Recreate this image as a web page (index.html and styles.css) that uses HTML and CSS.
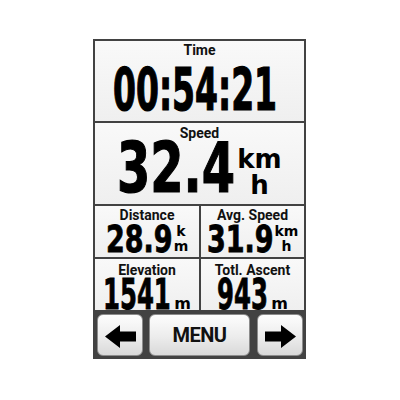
FILE: index.html
```html
<!DOCTYPE html>
<html>
<head>
<meta charset="utf-8">
<link rel="stylesheet" href="styles.css">
</head>
<body>
<div class="device">
  <div class="cell wide time">
    <div class="label">Time</div>
    <div class="value">
      <span class="dbox"><span class="digits">00:54:21</span></span>
    </div>
  </div>
  <div class="cell wide speed">
    <div class="label">Speed</div>
    <div class="value">
      <span class="dbox"><span class="digits">32.4</span></span>
      <span class="unit"><span>km</span><span>h</span></span>
    </div>
  </div>
  <div class="cell dist">
    <div class="label">Distance</div>
    <div class="value">
      <span class="dbox"><span class="digits">28.9</span></span>
      <span class="unit"><span>k</span><span>m</span></span>
    </div>
  </div>
  <div class="cell avg">
    <div class="label">Avg. Speed</div>
    <div class="value">
      <span class="dbox"><span class="digits">31.9</span></span>
      <span class="unit"><span>km</span><span>h</span></span>
    </div>
  </div>
  <div class="cell elev">
    <div class="label">Elevation</div>
    <div class="value">
      <span class="dbox"><span class="digits">1541</span></span>
      <span class="unit"><span>m</span></span>
    </div>
  </div>
  <div class="cell asc">
    <div class="label">Totl. Ascent</div>
    <div class="value">
      <span class="dbox"><span class="digits">943</span></span>
      <span class="unit"><span>m</span></span>
    </div>
  </div>
  <div class="bar">
    <div class="btn arrow prev">
      <svg width="31" height="23" viewBox="0 0 31 23"><polygon points="0,11.5 15,0 15,6.5 31,6.5 31,16.5 15,16.5 15,23" fill="#000"/></svg>
    </div>
    <div class="btn menu">MENU</div>
    <div class="btn arrow next">
      <svg width="31" height="23" viewBox="0 0 31 23"><polygon points="31,11.5 16,0 16,6.5 0,6.5 0,16.5 16,16.5 16,23" fill="#000"/></svg>
    </div>
  </div>
</div>
</body>
</html>
```

FILE: styles.css
```css
html, body {
  margin: 0;
  padding: 0;
  background: #ffffff;
}

.device {
  margin: 39px 0 0 93px;
  width: 213px;
  height: 320px;
  box-sizing: border-box;
  padding: 2px;
  background: #424242;
  display: grid;
  grid-template-columns: 104px 103px;
  grid-template-rows: 80px 81px 51px 51px 45px;
  gap: 2px;
}

.cell {
  background: linear-gradient(#f9f9f9, #efefef);
  display: flex;
  flex-direction: column;
  align-items: center;
}

.wide {
  grid-column: span 2;
}

.label {
  font-family: Roboto, "DejaVu Sans Condensed", sans-serif;
  font-weight: bold;
  font-size: 14px;
  line-height: 14px;
  color: #111;
  margin-top: 2px;
}

.value {
  display: flex;
  align-items: flex-start;
  justify-content: center;
}

.dbox {
  display: block;
}

.digits {
  display: block;
  font-family: "DejaVu Sans Condensed", "DejaVu Sans", sans-serif;
  font-weight: bold;
  line-height: 0.766;
  white-space: nowrap;
  color: #000;
  transform-origin: 0 0;
  -webkit-text-stroke: 0.8px #000;
}

.unit {
  display: flex;
  flex-direction: column;
  align-items: center;
  font-family: "DejaVu Sans", sans-serif;
  font-weight: bold;
  color: #000;
}

/* Time */
.time .value {
  margin-top: 11px;
  padding-right: 10px;
}
.time .dbox {
  width: 164px;
}
.time .digits {
  font-size: 58px;
  transform: scaleX(0.632);
  -webkit-text-stroke: 1.2px #000;
}

/* Speed */
.speed .label {
  margin-top: 3px;
}
.speed .value {
  margin-top: 2px;
}
.speed .dbox {
  width: 118px;
}
.speed .digits {
  font-size: 70px;
  transform: scaleX(0.76);
  -webkit-text-stroke: 1.2px #000;
}
.speed .unit {
  font-size: 26px;
  line-height: 26px;
  margin-top: 4px;
  margin-left: 2px;
}

/* Distance / Avg speed */
.dist .value,
.avg .value {
  margin-top: 3px;
}
.dist .dbox,
.avg .dbox {
  width: 67px;
}
.dist .digits,
.avg .digits {
  font-size: 38px;
  transform: scaleX(0.79);
}
.dist .unit,
.avg .unit {
  font-size: 14px;
  line-height: 15px;
  margin-top: -1px;
  margin-left: 1px;
}

/* Elevation / Ascent */
.elev .label,
.asc .label {
  margin-top: 4px;
}
.elev .value,
.asc .value {
  margin-top: 1px;
  align-items: flex-end;
}
.elev .dbox {
  width: 68px;
}
.asc .dbox {
  width: 51px;
}
.elev .digits,
.asc .digits {
  font-size: 43px;
  transform: scaleX(0.63);
}
.elev .unit,
.asc .unit {
  font-size: 16px;
  line-height: 16px;
  margin-bottom: -1px;
  margin-left: 3px;
}

/* Button bar */
.bar {
  grid-column: span 2;
  display: flex;
  align-items: stretch;
  padding: 2px 1px 1px 2px;
}

.btn {
  box-sizing: border-box;
  background: linear-gradient(#fdfdfd, #ececec 55%, #d9d9d9);
  border: 1px solid #8c8c8c;
  border-radius: 6px;
  display: flex;
  align-items: center;
  justify-content: center;
}

.arrow {
  width: 46px;
}

.arrow svg {
  display: block;
  margin-top: 3px;
}

.menu {
  width: 101px;
  margin: 0 7px 0 6px;
  font-family: Roboto, "DejaVu Sans Condensed", sans-serif;
  font-weight: bold;
  font-size: 20px;
  letter-spacing: -0.5px;
  color: #111;
}
```
